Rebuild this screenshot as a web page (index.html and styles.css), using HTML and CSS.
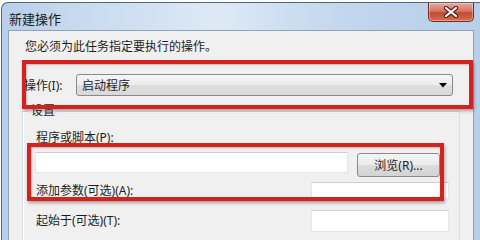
FILE: index.html
```html
<!DOCTYPE html>
<html lang="zh-CN">
<head>
<meta charset="utf-8">
<title>新建操作</title>
<link rel="stylesheet" href="styles.css">
</head>
<body>
<div class="window">
  <div class="titlebar">
    <span class="title">新建操作</span>
    <div class="close">
      <svg width="16" height="12" viewBox="0 0 16 12"><path d="M3 2 L13 10 M13 2 L3 10" stroke="#5a1a14" stroke-width="4.2" stroke-linecap="round"/><path d="M3 2 L13 10 M13 2 L3 10" stroke="#fff" stroke-width="2.2" stroke-linecap="round"/></svg>
    </div>
  </div>
  <div class="client">
    <p class="intro">您必须为此任务指定要执行的操作。</p>
    <div class="action-row">
      <span class="action-label">操作(I):</span>
      <div class="combo">
        <span>启动程序</span>
        <svg width="8" height="5" viewBox="0 0 8 5"><path d="M0 0 H8 L4 4.5 Z" fill="#000"/></svg>
      </div>
    </div>
    <div class="group">
      <div class="legend">设置</div>
      <div class="field-label">程序或脚本(P):</div>
      <div class="program-row">
        <div class="textbox program"></div>
        <div class="btn">浏览(R)...</div>
      </div>
      <div class="opt-row args">
        <span class="opt-label">添加参数(可选)(A):</span>
        <div class="textbox small"></div>
      </div>
      <div class="opt-row start">
        <span class="opt-label">起始于(可选)(T):</span>
        <div class="textbox small tall"></div>
      </div>
    </div>
  </div>
  <div class="mark mark-action"></div>
  <div class="mark mark-program"></div>
</div>
</body>
</html>
```

FILE: styles.css
```css
* { box-sizing: border-box; }
html, body { margin: 0; padding: 0; background: #ffffff; }
body {
  font-family: "Noto Sans", "Noto Sans CJK SC", sans-serif;
  font-size: 12px;
  color: #1e1e1e;
}
.window {
  position: relative;
  width: 480px;
  height: 240px;
  overflow: hidden;
  display: flex;
  flex-direction: column;
  background: linear-gradient(90deg, #b9d0ea 0%, #cadcf0 20%, #dde9f6 45%, #c3d7ee 70%, #b7cfe9 100%);
  border-top: 1px solid #52677f;
  border-left: 1px solid #52677f;
  border-top-left-radius: 7px;
  margin: 2px 0 0 1px;
}
.titlebar {
  height: 27px;
  flex: none;
  display: flex;
  align-items: flex-start;
  justify-content: space-between;
  padding: 0 7px 0 7px;
}
.title {
  font-size: 13px;
  line-height: 16px;
  padding-top: 8px;
  color: #1b1b1b;
}
.close {
  width: 46px;
  height: 19px;
  border: 1px solid #6e2c24;
  border-top: none;
  border-radius: 0 0 5px 5px;
  background: linear-gradient(180deg, #e9a99b 0%, #d7735f 45%, #c04a33 55%, #d66f55 100%);
  box-shadow: inset 0 0 0 1px rgba(255,255,255,0.35);
  display: flex;
  align-items: center;
  justify-content: center;
}
.client {
  flex: 1;
  margin: 0 7px 0 6px;
  background: #f0f0f0;
  border: 1px solid #8fa4bb;
  border-bottom: none;
}
.intro {
  margin: 8px 0 0 16px;
  line-height: 16px;
}
.action-row {
  margin-top: 19px;
  padding-left: 15px;
  display: flex;
  align-items: center;
  height: 22px;
}
.action-label {
  width: 52px;
  flex: none;
}
.combo {
  width: 377px;
  height: 22px;
  border: 1px solid #8a8a8a;
  border-radius: 3px;
  background: linear-gradient(180deg, #f5f5f5 0%, #ececec 50%, #dedede 51%, #d9d9d9 100%);
  display: flex;
  align-items: center;
  justify-content: space-between;
  padding: 0 5px 0 5px;
}
.group {
  margin: 15px 13px 0 13px;
  flex: 1;
  border: 1px solid #d5dfe5;
  border-bottom: none;
  box-shadow: inset 1px 1px 0 #ffffff;
  padding: 0 10px 0 12px;
  height: 140px;
}
.legend {
  width: max-content;
  margin: -9px 0 0 -6px;
  padding: 0 2px;
  background: #f0f0f0;
  line-height: 16px;
}
.field-label {
  margin-top: 11px;
  padding-left: 1px;
  line-height: 16px;
}
.program-row {
  margin-top: 6px;
  display: flex;
  align-items: flex-start;
}
.textbox {
  background: #ffffff;
  border: 1px solid #e2e6ea;
  border-top-color: #c9ced4;
}
.program {
  width: 313px;
  height: 21px;
}
.btn {
  margin-left: 9px;
  margin-top: 1px;
  width: 83px;
  height: 24px;
  border: 1px solid #8a8a8a;
  border-radius: 3px;
  background: linear-gradient(180deg, #f4f4f4 0%, #ebebeb 50%, #dcdcdc 51%, #d3d3d3 100%);
  display: flex;
  align-items: center;
  justify-content: center;
}
.opt-row {
  display: flex;
  justify-content: space-between;
}
.opt-label { padding-left: 1px; line-height: 16px; }
.args { margin-top: 5px; align-items: flex-end; }
.start { margin-top: 11px; align-items: center; }
.small { width: 138px; height: 17px; }
.tall { height: 22px; }
.mark {
  position: absolute;
  border: 4px solid #d2231f;
  box-shadow: 1px 2px 3px rgba(60, 0, 0, 0.35), inset 1px 1px 2px rgba(60, 0, 0, 0.25);
}
.mark-action { left: 20px; top: 57px; width: 451px; height: 49px; }
.mark-program { left: 25px; top: 140px; width: 417px; height: 58px; }
```
